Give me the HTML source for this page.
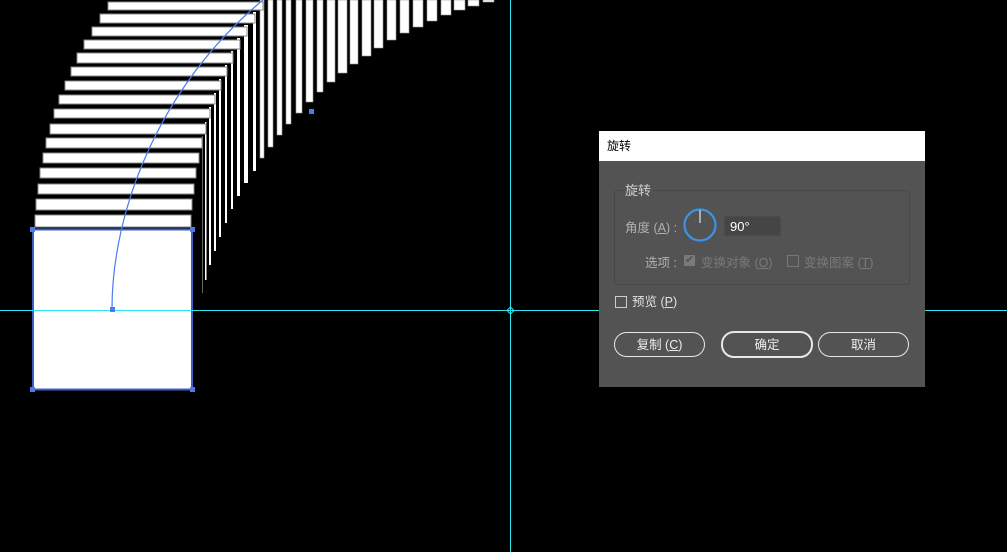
<!DOCTYPE html>
<html><head><meta charset="utf-8"><style>
html,body{margin:0;padding:0;background:#000;width:1007px;height:552px;overflow:hidden;position:relative;font-family:"Liberation Sans","Noto Sans CJK SC",sans-serif}
.dlg{position:absolute;left:599px;top:131px;width:326px;height:256px;background:#535353}
.tb{position:absolute;left:0;top:0;width:326px;height:30px;background:#fff;color:#000;font-size:12px;line-height:30px;padding-left:8px;box-sizing:border-box}
.t{position:absolute;font-size:12.5px;white-space:nowrap;line-height:14px}
.btn{position:absolute;top:201px;height:23px;border:1.5px solid #e8e8e8;border-radius:13px;color:#eee;font-size:12.5px;text-align:center;line-height:25px;box-sizing:content-box}
u{text-decoration:underline}
</style></head><body>
<svg width="1007" height="552" style="position:absolute;left:0;top:0">
<g fill="#fff" stroke="#999" stroke-width="0.6">
<rect x="260" y="0" width="4" height="158"/><rect x="268" y="0" width="5" height="147"/><rect x="277" y="0" width="5" height="135"/><rect x="286" y="0" width="5" height="124"/><rect x="296" y="0" width="6" height="113"/><rect x="306" y="0" width="7" height="102"/><rect x="317" y="0" width="6" height="92"/><rect x="327" y="0" width="8" height="82"/><rect x="338" y="0" width="9" height="73"/><rect x="350" y="0" width="8" height="64"/><rect x="362" y="0" width="9" height="56"/><rect x="374" y="0" width="9" height="48"/><rect x="387" y="0" width="9" height="40"/><rect x="400" y="0" width="9" height="33"/><rect x="413" y="0" width="10" height="27"/><rect x="427" y="0" width="10" height="21"/><rect x="441" y="0" width="10" height="15"/><rect x="454" y="0" width="11" height="10"/><rect x="468" y="0" width="11" height="6"/><rect x="483" y="0" width="11" height="2"/>
</g>
<g fill="#fff">
<rect x="253" y="12" width="3" height="159"/><rect x="244" y="25" width="4" height="158"/><rect x="237" y="38" width="3" height="158"/><rect x="231" y="51" width="2" height="158"/><rect x="225" y="65" width="2" height="158"/><rect x="219" y="79" width="2" height="158"/><rect x="214" y="93" width="2" height="158"/><rect x="209" y="107" width="2" height="158"/><rect x="205" y="122" width="1.5" height="158"/>
<rect x="202" y="136" width="1" height="157" fill="#666"/>
</g>
<g fill="#fff" stroke="#888" stroke-width="1">
<rect x="108" y="2" width="155" height="8"/><rect x="100" y="14" width="155" height="9"/><rect x="92" y="27" width="155" height="9"/><rect x="84" y="40" width="156" height="9"/><rect x="77" y="53" width="156" height="10"/><rect x="71" y="67" width="156" height="9"/><rect x="65" y="81" width="156" height="9"/><rect x="59" y="95" width="156" height="9"/><rect x="54" y="109" width="156" height="9"/><rect x="50" y="124" width="156" height="10"/><rect x="46" y="138" width="156" height="10"/><rect x="43" y="153" width="156" height="10"/><rect x="40" y="168" width="156" height="10"/><rect x="38" y="184" width="156" height="10"/><rect x="36" y="199" width="156" height="11"/><rect x="35" y="215" width="156" height="12"/>
</g>
<rect x="33" y="229.5" width="159" height="160" fill="#fff" stroke="#3f5fbf" stroke-width="2"/>
<line x1="510.5" y1="0" x2="510.5" y2="552" stroke="#2ee6ee" stroke-width="1"/>
<line x1="0" y1="310.5" x2="1007" y2="310.5" stroke="#2ee6ee" stroke-width="1"/>
<path d="M507 310.5 L510.5 307 L514 310.5 L510.5 314 Z" fill="none" stroke="#2ee6ee"/>
<path d="M112 309 C112 210 160 85 263 0" fill="none" stroke="#4a7cf0" stroke-width="1.2"/>
<g fill="#4a7cf0"><rect x="30" y="227" width="5" height="5"/><rect x="190" y="227" width="5" height="5"/><rect x="30" y="387" width="5" height="5"/><rect x="190" y="387" width="5" height="5"/><rect x="110" y="307" width="5" height="5"/><rect x="309" y="109" width="5" height="5"/></g>
</svg>
<div class="dlg">
<div class="tb">旋转</div>
<div style="position:absolute;left:15px;top:59px;width:294px;height:93px;border:1px solid #484848;border-radius:3px"></div>
<div class="t" style="left:24px;top:53px;color:#d0d0d0;background:#535353;padding:0 2px;font-size:13px">旋转</div>
<div class="t" style="left:26px;top:90px;color:#b0b0b0">角度 (<u>A</u>) :</div>
<svg style="position:absolute;left:84px;top:77px" width="34" height="34"><circle cx="17" cy="17" r="15.5" fill="none" stroke="#3b93e8" stroke-width="2.2"/><line x1="17" y1="2" x2="17" y2="15" stroke="#dfe9f5" stroke-width="1.2"/></svg>
<div style="position:absolute;left:125px;top:85px;width:57px;height:20px;background:#454545;border:1px solid #4b4b4b;border-radius:2px;color:#fff;font-size:13px;line-height:19px;padding-left:5px;box-sizing:border-box">90°</div>
<div class="t" style="left:46px;top:125px;color:#b0b0b0">选项 :</div>
<div style="position:absolute;left:85px;top:124px;width:11px;height:11px;background:#7a7a7a;border-radius:1px"></div>
<div class="t" style="left:86px;top:122px;color:#535353;font-size:11px">✔</div>
<div class="t" style="left:102px;top:125px;color:#7a7a7a">变换对象 (<u>O</u>)</div>
<div style="position:absolute;left:188px;top:124px;width:10px;height:10px;border:1px solid #777"></div>
<div class="t" style="left:205px;top:125px;color:#7a7a7a">变换图案 (<u>T</u>)</div>
<div style="position:absolute;left:16px;top:165px;width:10px;height:10px;border:1px solid #ccc"></div>
<div class="t" style="left:33px;top:164px;color:#e0e0e0">预览 (<u>P</u>)</div>
<div class="btn" style="left:15px;width:89px">复制 (<u>C</u>)</div>
<div class="btn" style="left:122px;width:88px;border-width:2.5px;top:200px">确定</div>
<div class="btn" style="left:219px;width:89px">取消</div>
</div>
</body></html>
